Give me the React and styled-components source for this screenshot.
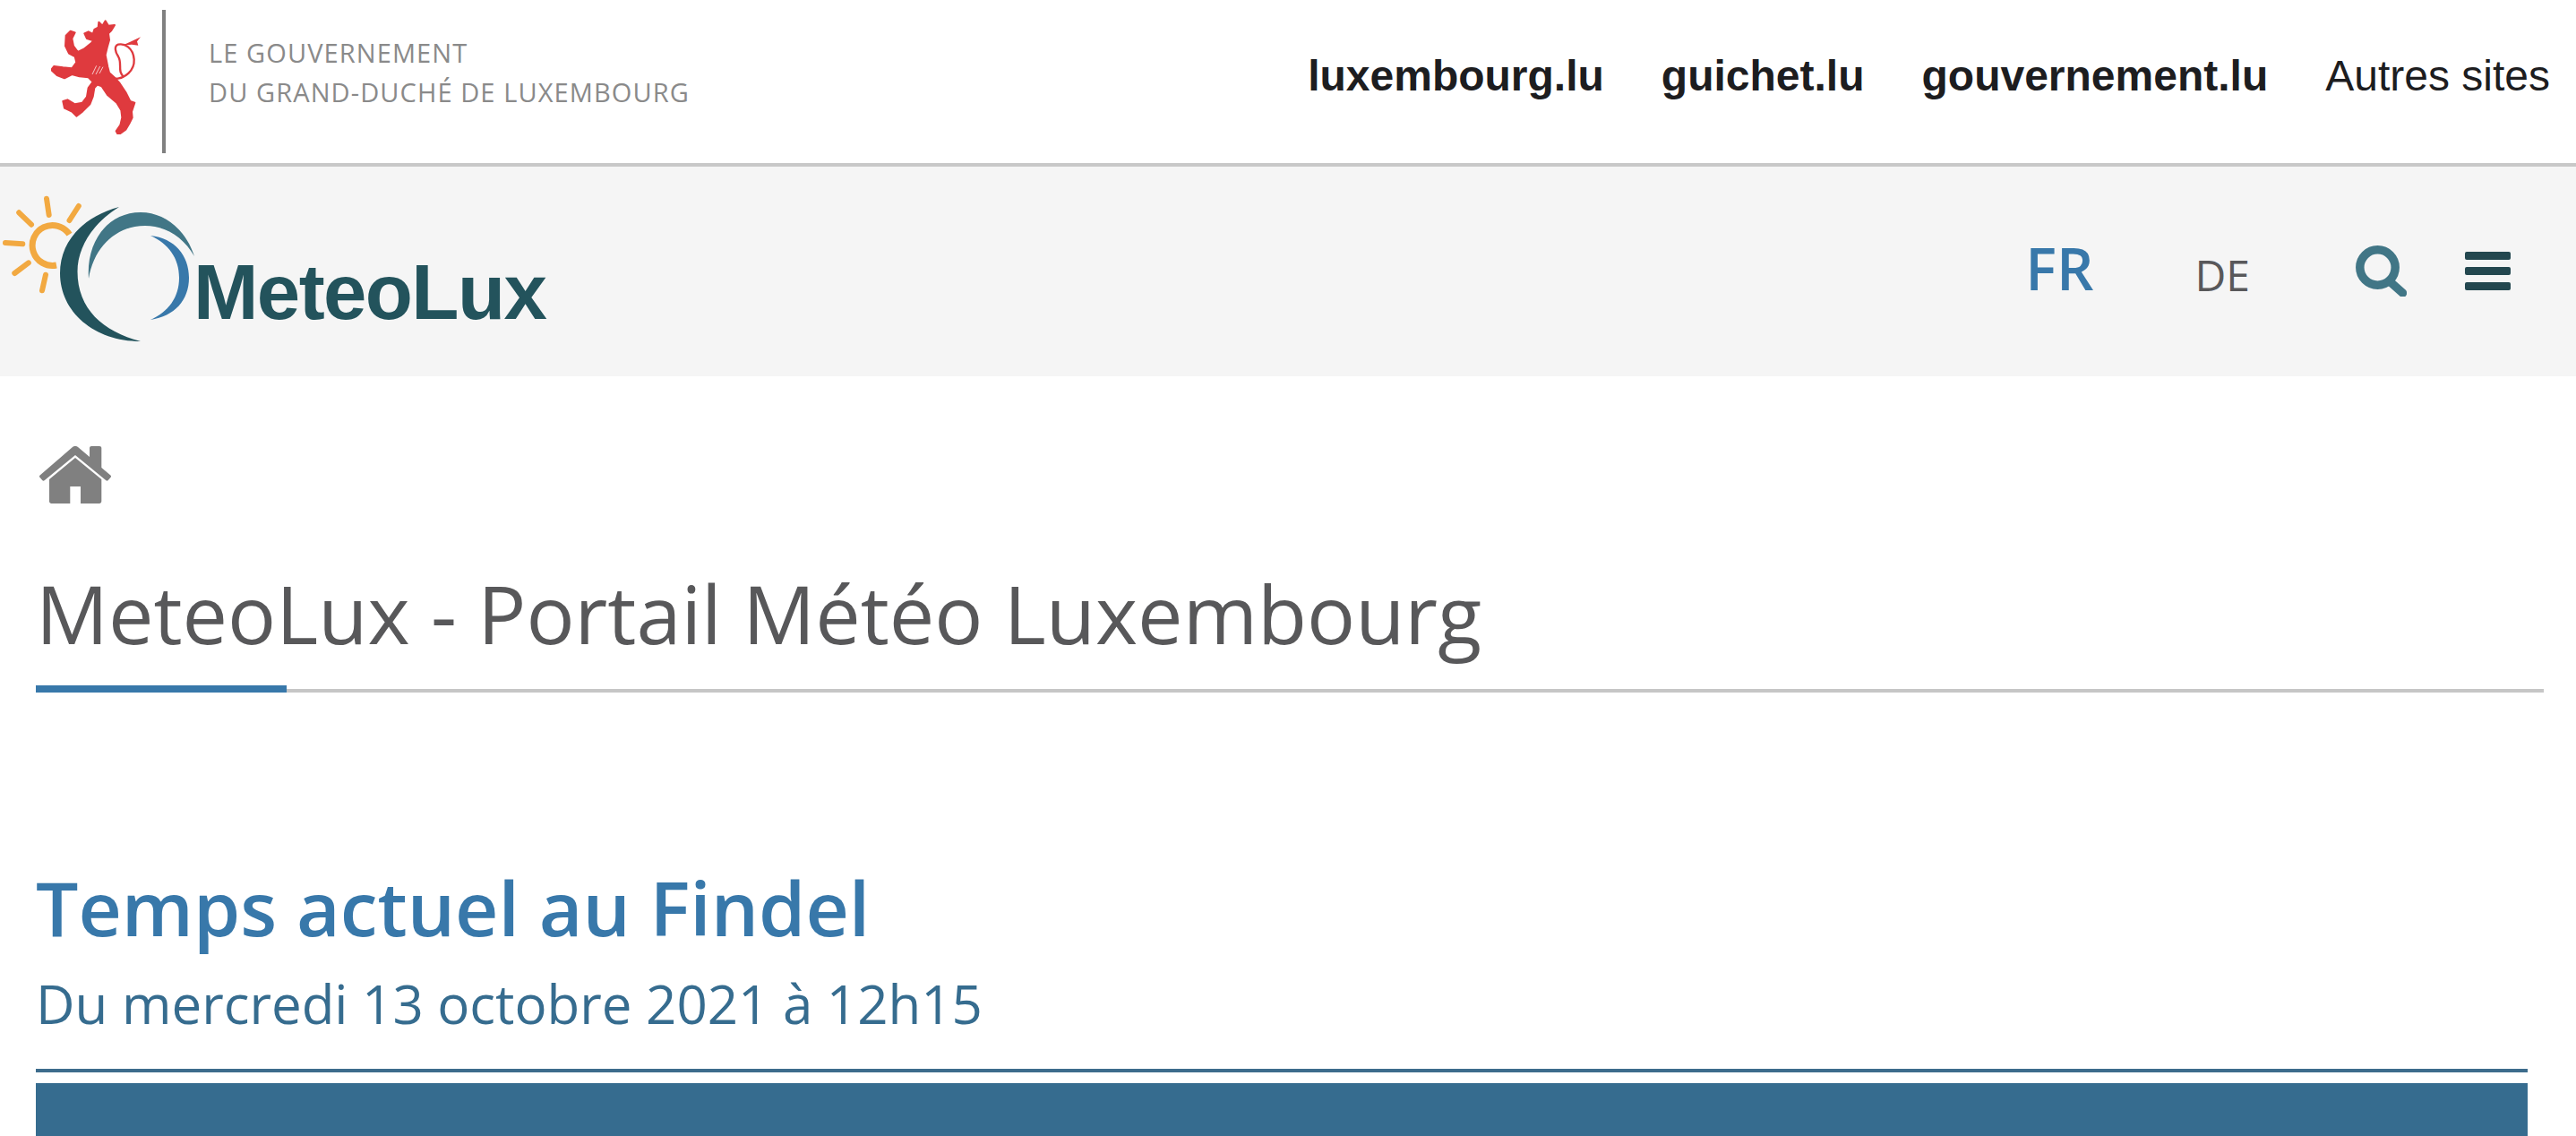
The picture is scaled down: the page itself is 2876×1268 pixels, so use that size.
import React from 'react';
import styled, { createGlobalStyle } from 'styled-components';

const GlobalStyle = createGlobalStyle`
  html, body {
    margin: 0;
    padding: 0;
    background: #fff;
    overflow: hidden;
  }
`;

const Page = styled.div`
  width: 2876px;
  height: 1268px;
  overflow: hidden;
  font-family: 'Open Sans', sans-serif;
`;

const GovBar = styled.header`
  height: 182px;
  border-bottom: 4px solid #c8c8c8;
  display: flex;
  align-items: center;
  justify-content: space-between;
  padding: 0 29px 0 57px;
`;

const GovBrand = styled.div`
  display: flex;
  align-items: center;
`;

const LionMark = styled.svg`
  margin-top: -5px;
  margin-bottom: 5px;
`;

const GovDivider = styled.div`
  width: 4px;
  height: 160px;
  background: #808080;
  margin: 0 48px 0 24px;
`;

const GovName = styled.div`
  color: #8a8a8a;
  font-size: 29px;
  font-weight: 500;
  line-height: 44px;
  letter-spacing: 1.1px;
  margin-top: -20px;
`;

const GovNav = styled.nav`
  display: flex;
  gap: 64px;
  margin-top: -13px;
`;

const GovLink = styled.a`
  font-family: 'Liberation Sans', Arial, sans-serif;
  font-size: 48px;
  font-weight: ${(p) => (p.$plain ? 400 : 700)};
  color: #1d1d1f;
  text-decoration: none;
`;

const SiteBar = styled.div`
  height: 234px;
  background: #f5f5f5;
  display: flex;
  align-items: center;
  justify-content: space-between;
  padding-right: 73px;
`;

const SiteTools = styled.div`
  display: flex;
  align-items: center;
  margin-top: -2px;
`;

const Lang = styled.a`
  color: ${(p) => (p.$active ? '#3878aa' : '#58585a')};
  font-size: ${(p) => (p.$active ? '65px' : '48px')};
  font-weight: ${(p) => (p.$active ? 600 : 400)};
  line-height: 1;
  margin-right: ${(p) => (p.$active ? '113px' : '118px')};
  position: relative;
  top: ${(p) => (p.$active ? '-3px' : '5px')};
`;

const MenuIcon = styled.div`
  width: 51px;
  display: grid;
  gap: 8px;
  margin-left: 65px;
`;

const MenuLine = styled.span`
  height: 9px;
  border-radius: 2px;
  background: #23474f;
`;

const Main = styled.main`
  padding: 0 36px 0 40px;
`;

const Crumbs = styled.div`
  padding: 78px 0 0 4px;
  height: 64px;
`;

const TitleBlock = styled.div`
  margin-top: 56px;
  height: 151px;
  border-bottom: 4px solid #c6c6c6;
  position: relative;
`;

const PageTitle = styled.h1`
  margin: 0;
  font-size: 90px;
  line-height: 132px;
  font-weight: 400;
  color: #58585a;
`;

const TitleAccent = styled.div`
  position: absolute;
  left: 0;
  bottom: -4px;
  width: 280px;
  height: 8px;
  background: #3878aa;
`;

const Section = styled.section`
  margin-right: 18px;
  margin-top: 186px;
`;

const SectionTitle = styled.h2`
  margin: 0 0 15px;
  font-size: 84px;
  line-height: 108px;
  font-weight: 600;
  color: #3878aa;
`;

const SectionDate = styled.p`
  margin: 0;
  font-size: 60px;
  line-height: 76px;
  color: #366c8f;
  padding-bottom: 35px;
  border-bottom: 4px solid #3d6c8c;
`;

const Banner = styled.div`
  margin-top: 12px;
  height: 120px;
  background: #366c8f;
`;

function Lion() {
  return (
    <LionMark width="100" height="128" viewBox="80 72 300 384" fill="#df3a3e">
      <path
        d="M240 80L252 92L262 76L272 92L293 90L282 108L272 118L275 140L268 165L262 190L270 230L275 250L295 268L310 285L330 315L345 345L360 350L350 380L352 400L342 420L330 440L305 458L298 445L312 425L318 400L315 375L300 350L270 325L250 295L235 290L225 300L220 330L210 355L185 380L165 395L150 380L125 368L120 345L135 340L160 355L185 350L200 330L205 300L220 280L205 265L175 262L150 255L125 268L100 258L80 240L90 228L120 232L150 235L165 215L160 195L140 185L128 160L130 125L145 110L160 115L150 135L155 160L170 180L190 170L215 150L222 142L200 135L192 118L205 112L220 120L225 105L238 98Z"
        stroke="#df3a3e"
        strokeWidth="6"
        strokeLinejoin="round"
      />
      <path d="M290 270C330 270 360 240 358 205C355 165 325 150 305 155C290 160 295 180 305 195C320 220 300 245 325 265" fill="none" stroke="#df3a3e" strokeWidth="7" />
      <path d="M318 158L345 146L380 130L368 145L372 158L350 155Z" />
      <path d="M218 255L232 226M230 255L244 228M242 252L254 230" fill="none" stroke="#f6c9ca" strokeWidth="3" />
    </LionMark>
  );
}

function Logo() {
  return (
    <svg width="640" height="234" viewBox="0 -4 640 234">
      <g fill="none" stroke="#f2a941" strokeLinecap="round">
        <path d="M77.5 71.7A22.5 22.5 0 1 0 63 106" strokeWidth="7" strokeLinecap="butt" />
        <path d="M52 31.7L54.7 50M87.8 40L77.5 56M21.2 47.3L35 60.7M6 81L25.3 82.3M16.3 115L31.8 103.3M51 116.7L47 134.3" strokeWidth="6" />
      </g>
      <path d="M133 41C92 52 67 80 67 115C67 158 105 191 157 191C115 180 86.5 155 86.5 113C86.5 85 105 58 133 41Z" fill="#23535c" />
      <path d="M99 121C96 80 120 47 157 47C185 47 208 68 217 96C205 75 185 62 162 62C130 62 105 85 99 121Z" fill="#417686" />
      <path d="M168 73C195 76 211 95 211 120C211 145 195 163 168 167C188 158 200 142 200 120C200 98 188 82 168 73Z" fill="#3878aa" />
      <text x="216" y="166" fontFamily="'Liberation Sans', Arial, sans-serif" fontWeight="700" fontSize="87" letterSpacing="-1.6" fill="#23535c">MeteoLux</text>
    </svg>
  );
}

function SearchIcon() {
  return (
    <svg width="57" height="57" viewBox="0 0 57 57" fill="none" stroke="#417686" strokeWidth="9.5">
      <circle cx="24.5" cy="24.5" r="19.7" />
      <path d="M39 41L52.5 53" strokeLinecap="round" />
    </svg>
  );
}

function HomeIcon() {
  return (
    <svg width="80" height="64" viewBox="0 0 80 64" fill="#808080">
      <path d="M37 1C39 -.4 41 -.4 43 1L56 12V2C56 .8 57 0 58 0H67C68.4 0 69.3 .8 69.3 2V24L79.4 32.6C80.2 33.4 80.2 34 79.6 34.8L76.8 38C76 38.8 75.2 38.8 74.4 38.2L40 10L5.6 38.2C4.8 38.8 4 38.8 3.2 38L.4 34.8C-.2 34 -.2 33.4 .6 32.6Z" />
      <path d="M40 13L69.3 37V61.5C69.3 63 68.2 64 67 64H46V45H34.3V64H13.5C12 64 11 63 11 61.5V37Z" />
    </svg>
  );
}

export default function App() {
  return (
    <Page>
      <GlobalStyle />
      <GovBar>
        <GovBrand>
          <Lion />
          <GovDivider />
          <GovName>
            LE GOUVERNEMENT
            <br />
            DU GRAND-DUCHÉ DE LUXEMBOURG
          </GovName>
        </GovBrand>
        <GovNav>
          <GovLink>luxembourg.lu</GovLink>
          <GovLink>guichet.lu</GovLink>
          <GovLink>gouvernement.lu</GovLink>
          <GovLink $plain>Autres sites</GovLink>
        </GovNav>
      </GovBar>
      <SiteBar>
        <Logo />
        <SiteTools>
          <Lang $active>FR</Lang>
          <Lang>DE</Lang>
          <SearchIcon />
          <MenuIcon>
            <MenuLine />
            <MenuLine />
            <MenuLine />
          </MenuIcon>
        </SiteTools>
      </SiteBar>
      <Main>
        <Crumbs>
          <HomeIcon />
        </Crumbs>
        <TitleBlock>
          <PageTitle>MeteoLux - Portail Météo Luxembourg</PageTitle>
          <TitleAccent />
        </TitleBlock>
        <Section>
          <SectionTitle>Temps actuel au Findel</SectionTitle>
          <SectionDate>Du mercredi 13 octobre 2021 à 12h15</SectionDate>
          <Banner />
        </Section>
      </Main>
    </Page>
  );
}
